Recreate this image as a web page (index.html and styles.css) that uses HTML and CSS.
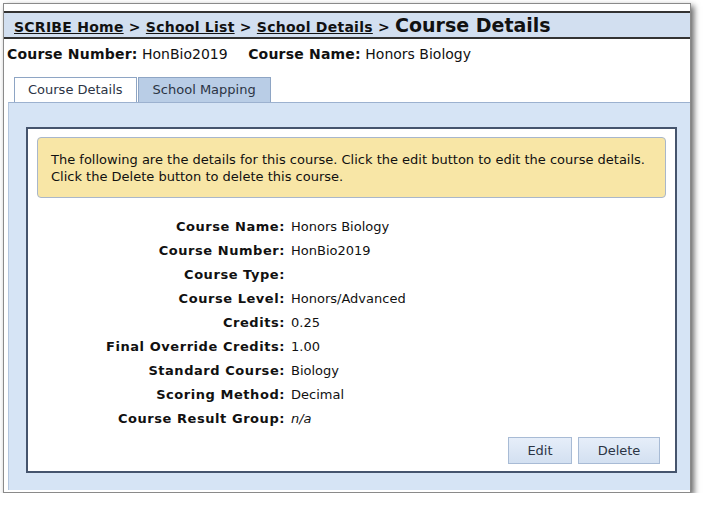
FILE: index.html
```html
<!DOCTYPE html>
<html lang="en">
<head>
  <meta charset="UTF-8" />
  <title>Course Details</title>
  <link rel="stylesheet" href="styles.css">
</head>
<body>
  <div class="window">
    <div class="crumbs">
      <a href="#">SCRIBE Home</a> &gt; <a href="#">School List</a> &gt; <a href="#">School Details</a> &gt; <span class="current">Course Details</span>
    </div>

    <div class="summary">
      <b>Course Number:</b> HonBio2019 <span class="gap"></span><b>Course Name:</b> Honors Biology
    </div>

    <div class="tabs">
      <div class="tab active">Course Details</div>
      <div class="tab">School Mapping</div>
    </div>

    <div class="panel">
      <div class="box">
        <div class="notice">
          The following are the details for this course. Click the edit button to edit the course details.<br>
          Click the Delete button to delete this course.
        </div>

        <table class="details">
          <tr><th>Course Name:</th><td>Honors Biology</td></tr>
          <tr><th>Course Number:</th><td>HonBio2019</td></tr>
          <tr><th>Course Type:</th><td></td></tr>
          <tr><th>Course Level:</th><td>Honors/Advanced</td></tr>
          <tr><th>Credits:</th><td>0.25</td></tr>
          <tr><th>Final Override Credits:</th><td>1.00</td></tr>
          <tr><th>Standard Course:</th><td>Biology</td></tr>
          <tr><th>Scoring Method:</th><td>Decimal</td></tr>
          <tr><th>Course Result Group:</th><td><i>n/a</i></td></tr>
        </table>

        <div class="actions">
          <button class="btn edit">Edit</button>
          <button class="btn delete">Delete</button>
        </div>
      </div>
    </div>
  </div>
</body>
</html>
```

FILE: styles.css
```css
body {
  margin: 0;
  background: #fff;
  font-family: "DejaVu Sans", Verdana, sans-serif;
  color: #111;
}
.window {
  margin: 3px 0 0 3px;
  width: 686px;
  height: 488px;
  border: 1px solid #8a8a8a;
  box-shadow: 3px 3px 6px rgba(0, 0, 0, 0.6);
  background: #fff;
  overflow: hidden;
}
.crumbs {
  margin-top: 7px;
  height: 24px;
  border-top: 2px solid #333;
  border-bottom: 2px solid #333;
  background: #d2dff0;
  padding-left: 10px;
  font-size: 14px;
  font-weight: bold;
  letter-spacing: 0.25px;
  line-height: 25px;
}
.crumbs a {
  color: #111;
  text-decoration: underline;
}
.crumbs .current {
  font-size: 19px;
  letter-spacing: 0;
}
.summary {
  padding: 7px 0 0 3px;
  font-size: 14px;
  line-height: 16px;
}
.summary b {
  letter-spacing: 0.2px;
}
.summary .gap {
  display: inline-block;
  width: 16px;
}
.tabs {
  display: flex;
  gap: 1px;
  margin: 15px 0 0 10px;
  height: 25px;
}
.tab {
  padding: 0 14px;
  font-size: 13px;
  line-height: 24px;
  color: #2b3445;
  background: #b9cde6;
  border: 1px solid #8ea5c4;
  border-bottom: none;
}
.tab.active {
  background: #fff;
  padding: 0 13px;
}
.panel {
  margin-left: 4px;
  height: 363px;
  background: #d6e4f5;
  border-top: 1px solid #9cb1cf;
  border-left: 1px solid #b3c5dd;
  padding: 24px 13px 0 17px;
}
.box {
  height: 334px;
  background: #fff;
  border: 2px solid #45546d;
  padding: 8px 9px 0 9px;
}
.notice {
  background: #f8e6a6;
  border: 1px solid #a9b7cb;
  border-radius: 4px;
  padding: 13px 13px 12px;
  font-size: 13px;
  line-height: 17px;
}
.details {
  margin: 16px 0 0 0;
  border-collapse: collapse;
  font-size: 13px;
}
.details th {
  width: 248px;
  text-align: right;
  font-weight: bold;
  letter-spacing: 0.55px;
  padding: 0 6px 0 0;
  height: 24px;
  white-space: nowrap;
}
.details td {
  text-align: left;
  padding: 0;
}
.actions {
  display: flex;
  justify-content: flex-end;
  gap: 6px;
  margin: 7px 6px 0 0;
}
.btn {
  font-family: "DejaVu Sans", Verdana, sans-serif;
  font-size: 13px;
  color: #2b3445;
  height: 27px;
  background: linear-gradient(#e6eef9, #d3e0f1);
  border: 1px solid #a8bbd5;
  cursor: pointer;
}
.btn.edit {
  width: 64px;
}
.btn.delete {
  width: 82px;
}
```
